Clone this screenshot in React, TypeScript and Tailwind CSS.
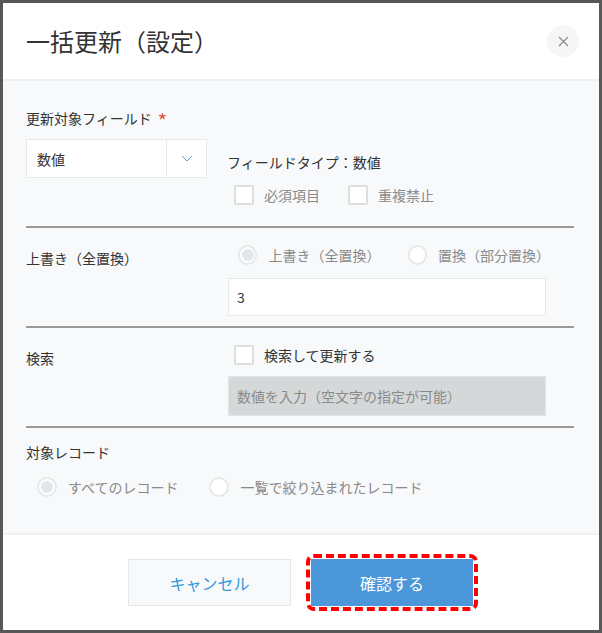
import React from "react";

const font = { fontFamily: '"Noto Sans CJK JP", "Noto Sans", sans-serif' };

function Checkbox({ label, muted }: { label: string; muted?: boolean }) {
  return (
    <label className="flex items-center gap-[10px]">
      <span className="block w-5 h-5 bg-white border-2 border-[#dcdfe0] rounded-[2px]" />
      <span className={muted ? "text-[#8a8a8a]" : "text-[#333]"}>{label}</span>
    </label>
  );
}

function Radio({ label, checked }: { label: string; checked?: boolean }) {
  return (
    <label className="flex items-center gap-[11px]">
      <span className="flex items-center justify-center w-5 h-5 bg-white border-2 border-[#e6e9ea] rounded-full">
        {checked && <span className="block w-[12px] h-[12px] rounded-full bg-[#e3e6e8]" />}
      </span>
      <span className="text-[#8a8a8a]">{label}</span>
    </label>
  );
}

export default function App() {
  return (
    <div
      className="w-[602px] h-[633px] border-[3px] border-[#585858] bg-white flex flex-col text-[14px] leading-5 text-[#333]"
      style={font}
    >
      {/* header */}
      <header className="h-[76px] flex items-center justify-between pl-[23px] pr-[20px] shrink-0">
        <h1 className="text-[24px] text-[#333] font-normal">一括更新（設定）</h1>
        <button className="w-8 h-8 rounded-full bg-[#f5f6f7] flex items-center justify-center">
          <svg width="11" height="11" viewBox="0 0 11 11" fill="none" stroke="#8e8e8e" strokeWidth="1.3">
            <path d="M1 1L10 10M10 1L1 10" />
          </svg>
        </button>
      </header>

      {/* body */}
      <main className="flex-1 bg-[#f7f9fa] border-t-2 border-[#eef0f2] pl-[23px] pr-[25px]">
        {/* field */}
        <section className="pt-[27px] pb-[21px] border-b-2 border-[#9a9a9a]">
          <div className="flex h-5 items-center">
            更新対象フィールド
            <span className="ml-[6px] text-[#e5533d] text-[20px] leading-none h-5 relative top-[3px]">*</span>
          </div>
          <div className="flex mt-[11px]">
            <div className="w-[181px] h-[39px] bg-white border border-[#e6e9ea] flex">
              <div className="flex-1 flex items-center pl-[10px] text-[#333]">数値</div>
              <div className="w-[40px] border-l border-[#e6e9ea] flex items-center justify-center">
                <svg width="12" height="7" viewBox="0 0 12 7" fill="none" stroke="#5b9fdc" strokeWidth="1">
                  <path d="M1 1L6 6L11 1" />
                </svg>
              </div>
            </div>
            <div className="ml-[20px] pt-[13px]">
              <div>フィールドタイプ：数値</div>
              <div className="flex gap-[28px] mt-[13px] ml-[7px]">
                <Checkbox label="必須項目" muted />
                <Checkbox label="重複禁止" muted />
              </div>
            </div>
          </div>
        </section>

        {/* overwrite */}
        <section className="flex pb-[10px] border-b-2 border-[#9a9a9a]">
          <div className="w-[202px] pt-[20px]">上書き（全置換）</div>
          <div className="w-[318px] pt-[17px]">
            <div className="flex gap-[31px] ml-[10px]">
              <Radio label="上書き（全置換）" checked />
              <Radio label="置換（部分置換）" />
            </div>
            <div className="mt-[13px] h-[38px] bg-white border border-[#e6e9ea] flex items-center pl-[8px] text-[#333]">
              3
            </div>
          </div>
        </section>

        {/* search */}
        <section className="flex pb-[10px] border-b-2 border-[#9a9a9a]">
          <div className="w-[202px] pt-[20px]">検索</div>
          <div className="w-[318px] pt-[17px]">
            <div className="ml-[6px]">
              <Checkbox label="検索して更新する" />
            </div>
            <div className="mt-[11px] h-[40px] bg-[#d5d8d8] border border-[#e2e5e6] flex items-center pl-[8px] text-[#8a8a8a]">
              数値を入力（空文字の指定が可能）
            </div>
          </div>
        </section>

        {/* records */}
        <section className="pt-[14px]">
          <div>対象レコード</div>
          <div className="flex gap-[31px] mt-[15px] ml-[11px]">
            <Radio label="すべてのレコード" checked />
            <Radio label="一覧で絞り込まれたレコード" />
          </div>
        </section>
      </main>

      {/* footer */}
      <footer className="h-[97px] shrink-0 border-t-2 border-[#eef0f2] flex items-center pl-[125px] gap-[15px]">
        <button className="w-[163px] h-[47px] bg-[#f7f9fa] border border-[#e3e7e8] text-[#3498db] text-[16px]">
          キャンセル
        </button>
        <div className="p-[1px] border-4 border-dashed border-[#ff0000] rounded-[8px]">
          <button className="block w-[162px] h-[47px] bg-[#4b97d9] text-white text-[16px]">
            確認する
          </button>
        </div>
      </footer>
    </div>
  );
}
